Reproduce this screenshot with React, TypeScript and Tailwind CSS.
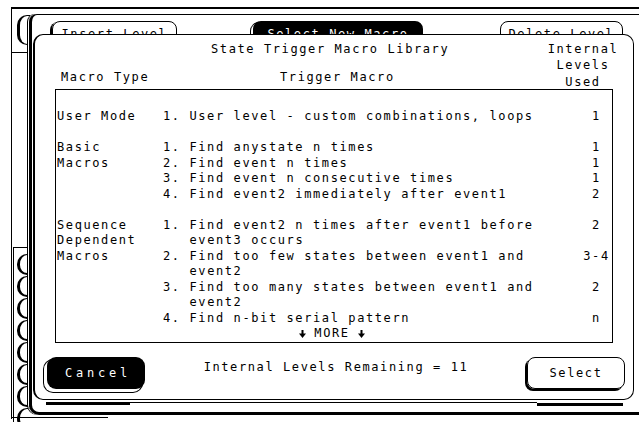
import React from 'react'

type Row = { type?: string; text: string; levels?: string; indent?: boolean }

const groups: Row[][] = [
  [{ type: 'User Mode', text: '1. User level - custom combinations, loops', levels: '1' }],
  [
    { type: 'Basic', text: '1. Find anystate n times', levels: '1' },
    { type: 'Macros', text: '2. Find event n times', levels: '1' },
    { text: '3. Find event n consecutive times', levels: '1' },
    { text: '4. Find event2 immediately after event1', levels: '2' },
  ],
  [
    { type: 'Sequence', text: '1. Find event2 n times after event1 before', levels: '2' },
    { type: 'Dependent', text: 'event3 occurs', indent: true },
    { type: 'Macros', text: '2. Find too few states between event1 and', levels: '3-4' },
    { text: 'event2', indent: true },
    { text: '3. Find too many states between event1 and', levels: '2' },
    { text: 'event2', indent: true },
    { text: '4. Find n-bit serial pattern', levels: 'n' },
  ],
]

function DownArrow() {
  return (
    <svg width="7" height="8" viewBox="0 0 7 8" className="block">
      <rect x="2.5" y="0" width="2" height="4" fill="black" />
      <polygon points="0,3.5 7,3.5 3.5,8" fill="black" />
    </svg>
  )
}

export default function App() {
  return (
    <div className="relative h-[422px] w-[639px] overflow-hidden bg-white font-['DejaVu_Sans_Mono','Liberation_Mono',monospace] text-[12px] leading-[16px] tracking-[1.6px] text-black">
      {/* screen frame */}
      <div className="absolute left-[11px] top-[7px] h-[412px] w-[640px] border-l border-t-2 border-black" />
      <div className="absolute left-[11px] top-[417px] h-px w-[97px] bg-black" />

      {/* left softkeys */}
      <div className="absolute left-[12px] top-[15px] flex w-[18px] flex-col">
        <div className="ml-[5px] h-[30px] rounded-l-[10px] border-y border-l-[3px] border-black" />
        <div className="mt-[7px] h-px bg-black" />
      </div>
      <div className="absolute bottom-0 left-[13px] top-[247px] flex w-[17px] flex-col gap-px border-l border-t border-black pt-[6px]">
        {Array.from({ length: 8 }).map((_, i) => (
          <div key={i} className="ml-[3px] h-[21px] shrink-0 rounded-l-[10px] border-b-2 border-l-[3px] border-t border-black" />
        ))}
      </div>

      {/* background panel */}
      <div className="absolute left-[29px] top-[14px] h-[401px] w-[630px] rounded-bl-[10px] rounded-tl-[8px] border-b-[3px] border-l-[3px] border-t border-black pl-[20px] pt-[6px] shadow-[-1px_0_0_#fff,-2px_0_0_#000]">
        <div className="flex gap-[76px]">
          <div className="flex h-[32px] w-[125px] justify-center rounded-[8px] border border-black pt-[4px] shadow-[-2px_1px_0_#000]">
            Insert Level
          </div>
          <div className="flex h-[32px] w-[170px] justify-center rounded-[8px] bg-black pt-[5px] text-white shadow-[-2px_2px_0_0_#fff,-2px_2px_0_1px_#000]">
            Select New Macro
          </div>
          <div className="ml-px flex h-[32px] w-[123px] justify-center rounded-[8px] border border-black pt-[4px]">
            Delete Level
          </div>
        </div>
      </div>

      {/* dialog */}
      <div className="absolute left-[33px] top-[34px] flex h-[366px] w-[601px] flex-col rounded-[10px] border border-l-2 border-black bg-white">
        <div className="flex h-[54px] shrink-0 pt-[5.5px]">
          <div className="flex-1">
            <div className="pl-[176px]">State Trigger Macro Library</div>
            <div className="mt-[12.6px] flex pl-[26px]">
              <span className="w-[219px]">Macro Type</span>
              <span>Trigger Macro</span>
            </div>
          </div>
          <div className="mr-[10px] w-[80px] text-center leading-[16.8px]">
            <div>Internal</div>
            <div>Levels</div>
            <div>Used</div>
          </div>
        </div>

        <div className="mx-[20px] h-[254px] shrink-0 border border-black pl-px pt-[19px] leading-[15.5px]">
          {groups.map((g, gi) => (
            <div key={gi} className={gi > 0 ? 'mt-[15.5px]' : ''}>
              {g.map((r, ri) => (
                <div key={ri} className="grid grid-cols-[106px_418px_31px]">
                  <span>{r.type ?? ''}</span>
                  <span className={r.indent ? 'pl-[26.5px]' : ''}>{r.text}</span>
                  <span className="text-center">{r.levels ?? ''}</span>
                </div>
              ))}
            </div>
          ))}
          <div className="flex items-center justify-center gap-[8px] pr-[5px]">
            <DownArrow />
            <span>MORE</span>
            <DownArrow />
          </div>
        </div>

        <div className="flex flex-1 items-start justify-between pl-[12px] pr-[8px] pt-[14px]">
          <div className="flex h-[32px] w-[98px] items-center justify-center rounded-[9px] bg-black pl-[4px] tracking-[3.8px] text-white shadow-[-3px_3px_0_0_#fff,-3px_3px_0_1px_#000]">
            Cancel
          </div>
          <div className="pt-[1.5px]">Internal Levels Remaining = 11</div>
          <div className="flex h-[32px] w-[98px] items-center justify-center rounded-[8px] border border-black shadow-[-2px_2px_0_#000]">
            Select
          </div>
        </div>
      </div>

      {/* dialog shadow */}
      <div className="absolute left-[46px] top-[402px] flex w-[577px] items-start">
        <div className="h-[3px] w-[84px] bg-black" />
        <div className="h-px flex-1 bg-black" />
        <div className="mt-px h-[3px] w-[86px] bg-black" />
      </div>
    </div>
  )
}
